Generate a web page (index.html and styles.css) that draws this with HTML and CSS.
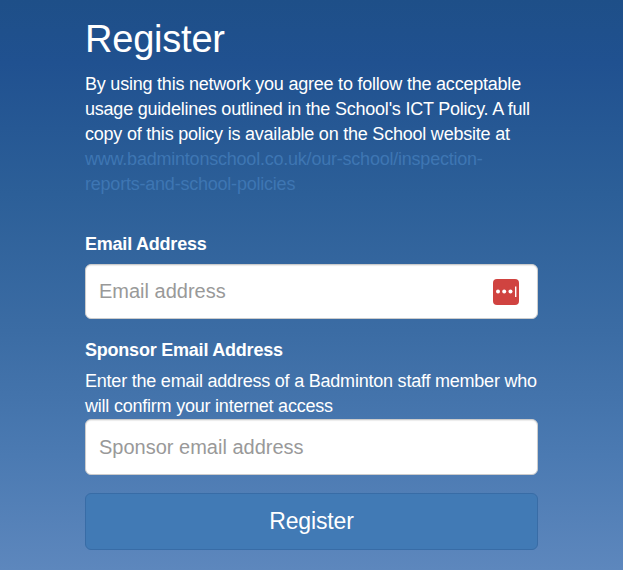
FILE: index.html
```html
<!DOCTYPE html>
<html lang="en">
<head>
  <meta charset="UTF-8" />
  <meta name="viewport" content="width=device-width, initial-scale=1.0" />
  <title>Register</title>
  <link rel="stylesheet" href="styles.css">
</head>
<body>
  <form class="register">
    <h1>Register</h1>
    <p class="intro">By using this network you agree to follow the acceptable usage guidelines outlined in the School's ICT Policy. A full copy of this policy is available on the School website at <a href="#">www.badmintonschool.co.uk/our-school/inspection-reports-and-school-policies</a></p>

    <label for="email">Email Address</label>
    <div class="field">
      <input type="email" id="email" placeholder="Email address">
      <svg class="field-icon" viewBox="0 0 26 26" width="26" height="26">
        <rect width="26" height="26" rx="4" fill="#d04340" />
        <circle cx="5" cy="12.5" r="2" fill="#fff" />
        <circle cx="11.2" cy="12.5" r="2" fill="#fff" />
        <circle cx="17.5" cy="12.5" r="2" fill="#fff" />
        <rect x="22" y="7.5" width="1.4" height="10.5" fill="#fff" />
      </svg>
    </div>

    <label for="sponsor">Sponsor Email Address</label>
    <p class="help">Enter the email address of a Badminton staff member who will confirm your internet access</p>
    <div class="field">
      <input type="email" id="sponsor" class="tall" placeholder="Sponsor email address">
    </div>

    <button type="submit">Register</button>
  </form>
</body>
</html>
```
FILE: styles.css
```css
* {
  box-sizing: border-box;
}
body {
  margin: 0;
  min-height: 570px;
  font-family: "Liberation Sans", Arial, sans-serif;
  font-size: 18px;
  line-height: 25px;
  letter-spacing: -0.22px;
  color: #fff;
  background: linear-gradient(180deg, #1e4f88 0%, #205190 11%, #2c5f98 34%, #3b6ca4 58%, #4b7ab2 80%, #5d87bd 100%);
  overflow: hidden;
}
.register {
  width: 453px;
  margin: 0 auto;
  padding-top: 18px;
}
h1 {
  margin: 0 0 12px;
  font-size: 38px;
  font-weight: 400;
  line-height: 42px;
}
p {
  margin: 0;
}
.intro {
  margin-bottom: 35px;
}
a {
  color: #3e76b3;
  text-decoration: none;
}
label {
  display: block;
  margin-bottom: 7px;
  font-weight: 700;
}
.field {
  position: relative;
  margin-bottom: 18px;
}
.field + label {
  padding-top: 1px;
}
.field-icon {
  position: absolute;
  top: 15px;
  right: 19px;
}
input {
  display: block;
  width: 100%;
  height: 55px;
  padding: 0 13px;
  font-family: inherit;
  font-size: 20px;
  border: 1px solid #ccc;
  border-radius: 6px;
  background: #fff;
  box-shadow: inset 0 1px 1px rgba(0, 0, 0, 0.08);
}
input.tall {
  height: 56px;
}
input::placeholder {
  color: #999;
}
.help {
  margin-top: -1px;
}
button {
  display: block;
  width: 100%;
  height: 57px;
  font-family: inherit;
  font-size: 23px;
  letter-spacing: -0.15px;
  color: #fff;
  background: #417ab5;
  border: 1px solid #386ca6;
  border-radius: 6px;
}
```
